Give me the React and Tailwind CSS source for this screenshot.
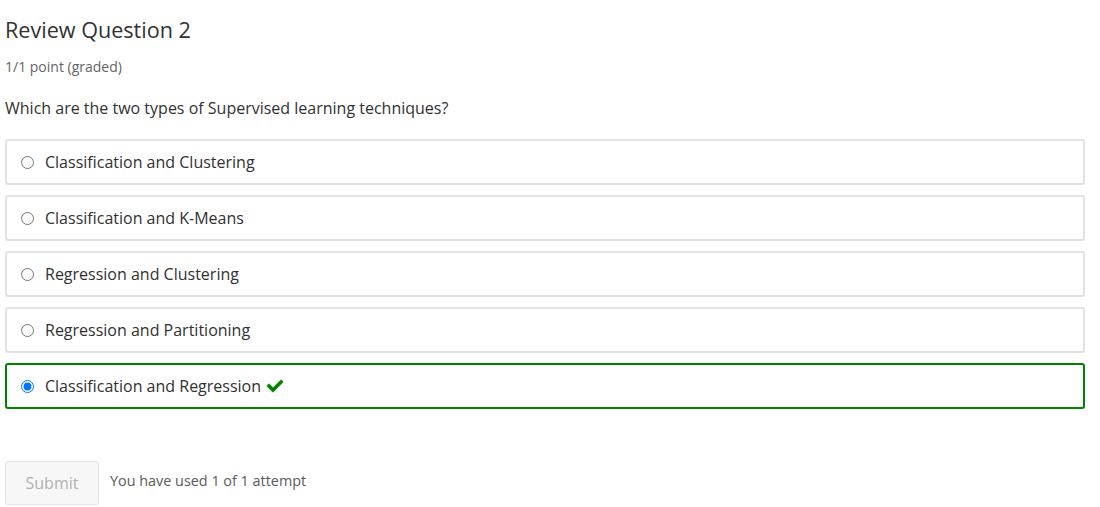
import React from "react";
import { FaCheck } from "react-icons/fa";

const options = [
  { label: "Classification and Clustering" },
  { label: "Classification and K-Means" },
  { label: "Regression and Clustering" },
  { label: "Regression and Partitioning" },
  { label: "Classification and Regression", correct: true },
];

export default function App() {
  return (
    <div
      className="w-[1100px] h-[507px] bg-white overflow-hidden pl-[5px] pr-[15px]"
      style={{ fontFamily: '"Open Sans", sans-serif' }}
    >
      <h2 className="text-[21.6px] leading-[30px] text-[#313131] pt-[15px]">Review Question 2</h2>
      <div className="text-[14px] leading-[20px] text-[#646464] mt-[12px]">1/1 point (graded)</div>
      <p className="text-[16px] leading-[22px] text-[#313131] mt-[20px]">
        Which are the two types of Supervised learning techniques?
      </p>
      <div className="flex flex-col gap-[10px] mt-[20px]">
        {options.map((o, i) => (
          <label
            key={i}
            className={
              "flex items-center h-[46px] rounded-[3px] border-2 pl-[14px] " +
              (o.correct ? "border-[#008100]" : "border-[#e2e2e2]")
            }
          >
            <input
              type="radio"
              name="q"
              defaultChecked={!!o.correct}
              className="m-0 w-[13px] h-[13px]"
            />
            <span className="ml-[11px] text-[16px] text-[#313131]">{o.label}</span>
            {o.correct && (
              <FaCheck className="ml-[5px] text-[#008100] w-[18px] h-[16px] stroke-[#008100] stroke-[20px]" />
            )}
          </label>
        ))}
      </div>
      <div className="flex items-center mt-[52px]">
        <button
          className="w-[94px] h-[44px] rounded-[3px] border border-[#e4e4e4] bg-[#f7f7f7] text-[#b1b1b1] text-[16px]"
          disabled
        >
          Submit
        </button>
        <span className="ml-[11px] mb-[4px] text-[14.4px] text-[#5a5a5a]">You have used 1 of 1 attempt</span>
      </div>
    </div>
  );
}
